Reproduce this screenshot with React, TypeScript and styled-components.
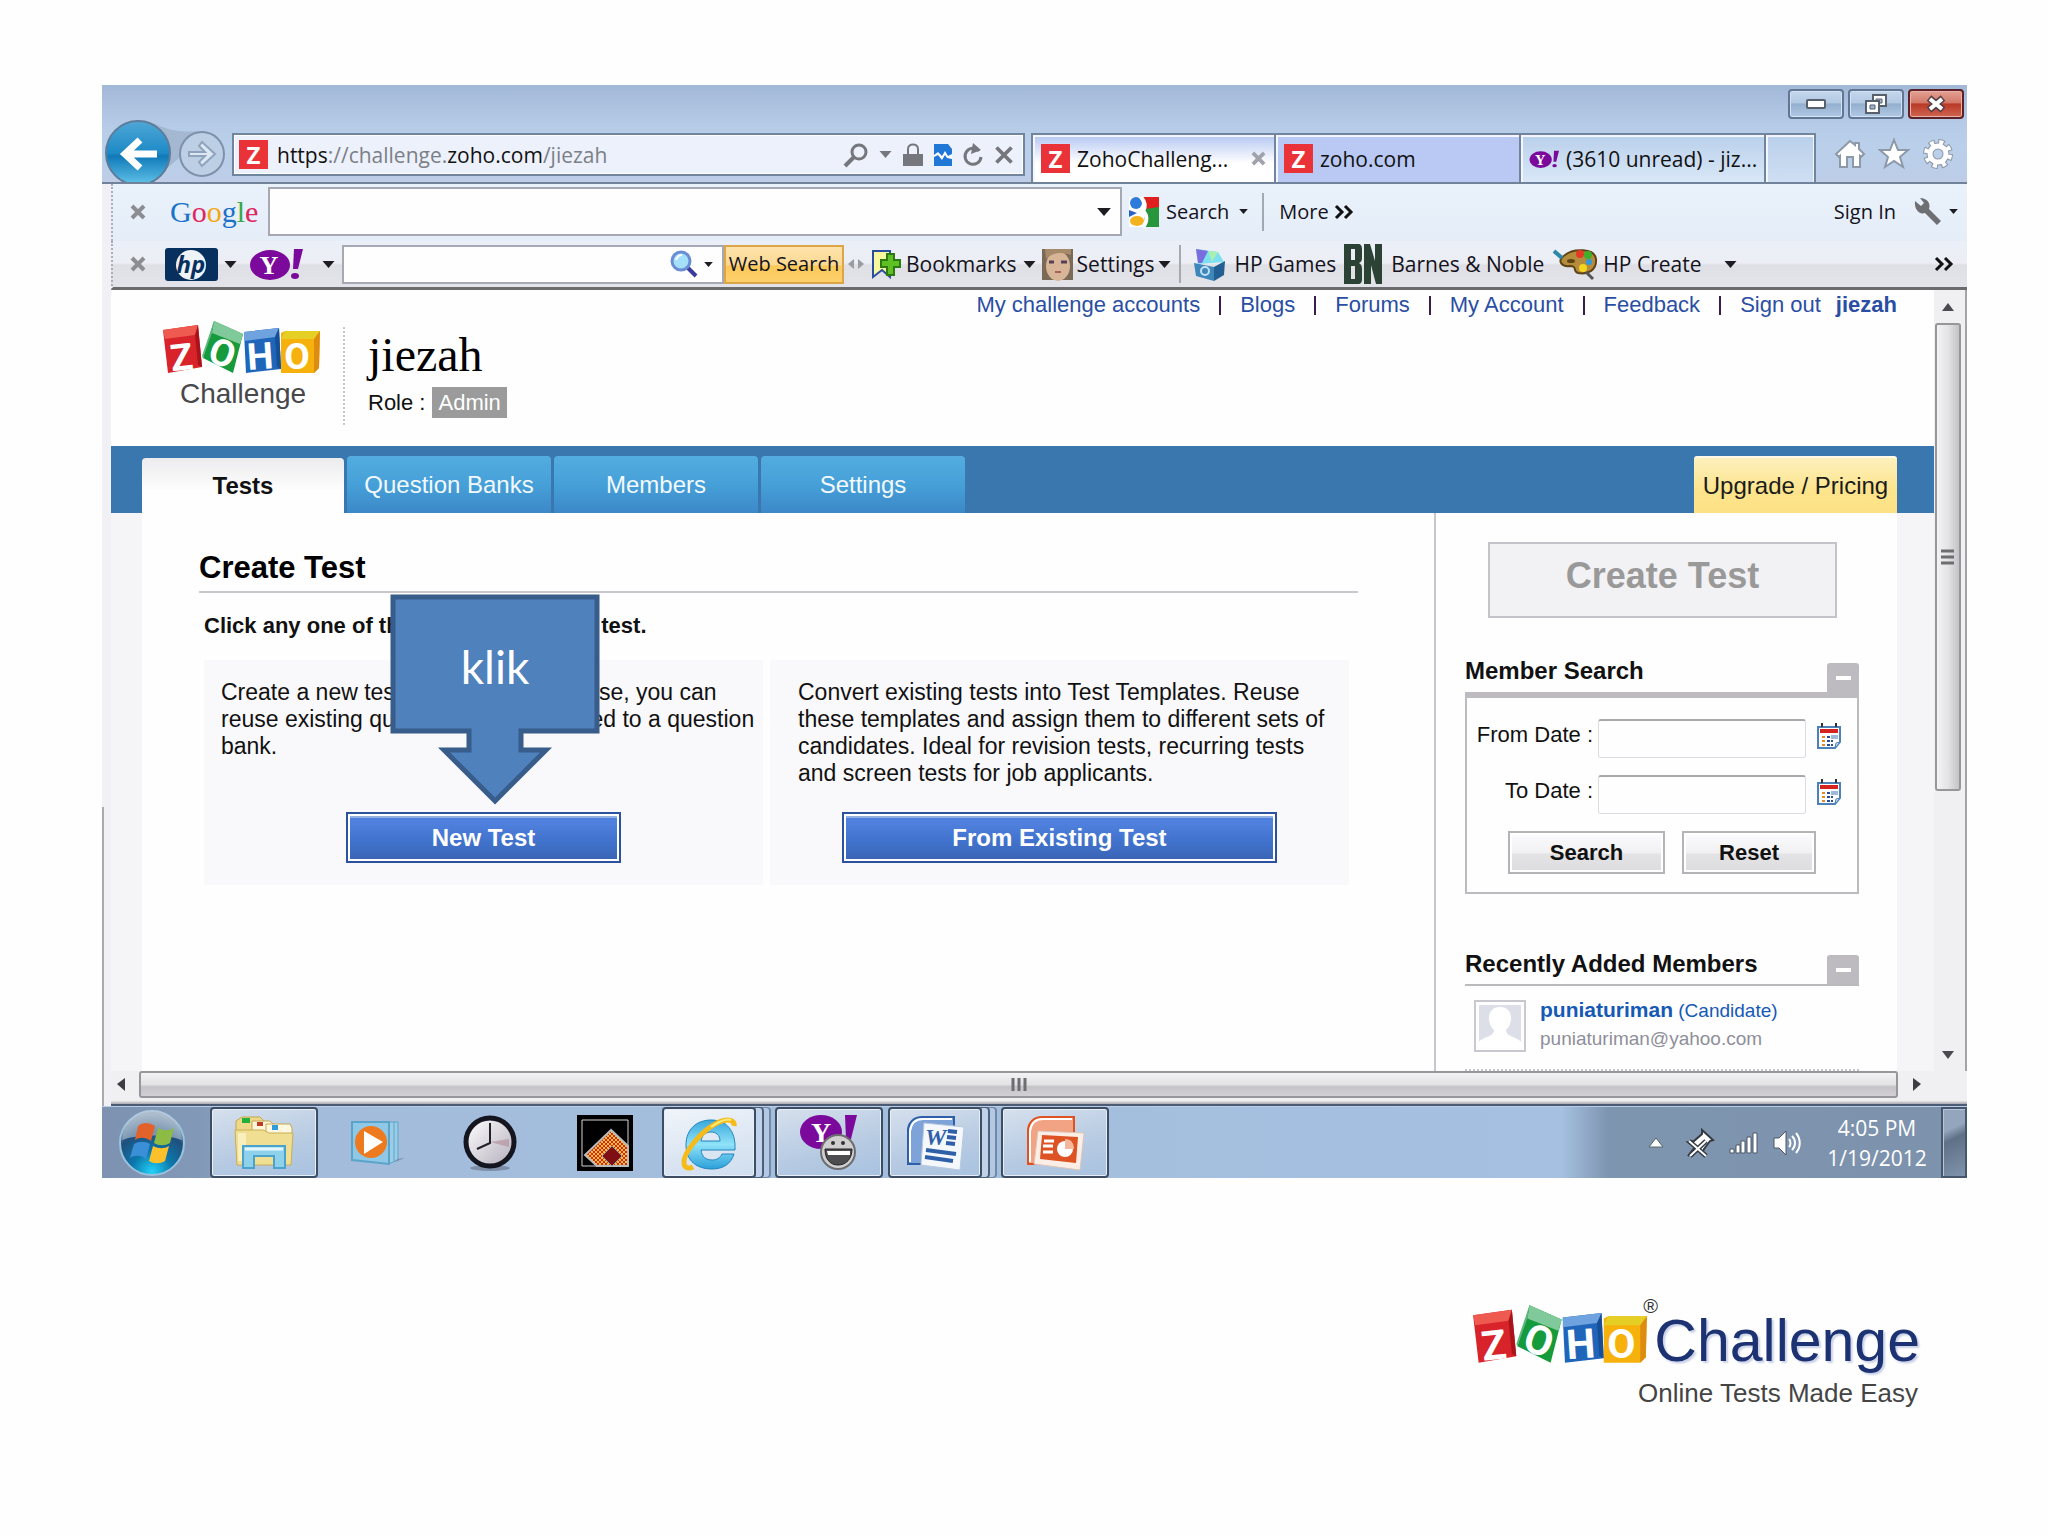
import React from "react";
import styled, { createGlobalStyle, css } from "styled-components";

const sans = `"Liberation Sans", Arial, sans-serif`;
const ui = `"Open Sans", "Noto Sans", sans-serif`;

const GlobalStyle = createGlobalStyle`
  *, *::before, *::after { box-sizing: border-box; }
  body { margin: 0; background: #fefefe; font-family: ${sans}; color: #111; }
  h1, h2, h3, p { margin: 0; }
  a { text-decoration: none; color: inherit; }
  button { font: inherit; color: inherit; border: 0; padding: 0; background: none; cursor: pointer; }
  input { font: inherit; padding: 0 8px; }
  svg { display: block; flex: none; overflow: visible; }
`;

const Slide = styled.div`
  min-height: 100vh;
  padding: 85px 81px 0 102px;
`;

const BrowserWindow = styled.div`
  display: flex;
  flex-direction: column;
`;

/* ---------- title bar, address bar and tabs ---------- */

const Chrome = styled.header`
  background: linear-gradient(#a2b8d7 0, #b4cae6 38px, #bad0ea 60px, #bccde8 92px, #c2cce5 100%);
  border-bottom: 2px solid #70839a;
`;

const CaptionRow = styled.div`
  display: flex;
  justify-content: flex-end;
  gap: 4px;
  height: 48px;
  padding: 4px 3px 0;
`;

const CaptionButton = styled.button<{ $close?: boolean }>`
  display: flex;
  align-items: center;
  justify-content: center;
  width: 56px;
  height: 30px;
  border: 2px solid ${(p) => (p.$close ? "#5a2226" : "#607692")};
  border-radius: 4px;
  box-shadow: inset 0 0 0 1px ${(p) => (p.$close ? "#eeb0a6" : "#d4e3f3")};
  background: ${(p) =>
    p.$close
      ? "linear-gradient(#e3a093 0, #d3796a 45%, #b93a26 50%, #cf6551 100%)"
      : "linear-gradient(#c3d6ec 0, #b3c9e3 45%, #94afcf 50%, #afc8e4 100%)"};
`;

const NavRow = styled.div`
  display: flex;
  align-items: flex-start;
  height: 49px;
  padding: 0 14px 0 3px;
`;

const BackButton = styled.button`
  height: 62px;
  margin: -13px 8px 0 0;
`;

const ForwardButton = styled.button`
  margin: -2px 7px 0 0;
`;

const AddressBar = styled.div`
  display: flex;
  align-items: center;
  flex: 1;
  height: 43px;
  padding: 0 9px 0 5px;
  border: 2px solid #71859e;
  background: #ecf1fb;
  box-shadow: inset 0 0 0 1px #fff;
`;

const Url = styled.div`
  flex: 1;
  padding-left: 9px;
  font: 21px/30px ${ui};
  color: #7b7f86;
  b { font-weight: 400; color: #111; }
`;

const AddressTools = styled.div`
  display: flex;
  align-items: center;
  gap: 11px;
`;

const TabStrip = styled.div`
  display: flex;
  margin: 0 19px 0 6px;
`;

const BrowserTab = styled.button<{ $tone: "active" | "lilac" | "plain" }>`
  display: flex;
  align-items: center;
  gap: 7px;
  width: 245px;
  height: 49px;
  padding: 0 8px;
  border: 2px solid #71859e;
  border-bottom: 0;
  border-left-width: ${(p) => (p.$tone === "active" ? "2px" : "0")};
  box-shadow: inset 2px 2px 0 #f3f7fd;
  font: 21px/30px ${ui};
  text-align: left;
  white-space: nowrap;
  color: #111;
  background: ${(p) =>
    p.$tone === "active"
      ? "linear-gradient(#b4c6f1 0, #fff 60%)"
      : p.$tone === "lilac"
      ? "#b9c9f3"
      : "linear-gradient(#b9cfea, #d9e8f8)"};
  svg:last-child { margin-left: auto; }
`;

const NewTab = styled.button`
  width: 50px;
  height: 49px;
  border: 2px solid #71859e;
  border-width: 2px 2px 0 0;
  box-shadow: inset 2px 2px 0 #f3f7fd, inset -1px 0 0 #f3f7fd;
  background: linear-gradient(#b9cfea, #cfdff3);
`;

const ChromeTools = styled.div`
  display: flex;
  gap: 14px;
  padding-top: 6px;
`;

const Favicon = styled.span`
  display: flex;
  align-items: center;
  justify-content: center;
  flex: none;
  width: 29px;
  height: 29px;
  background: #ea3339;
  color: #fff;
  font: 700 24px/29px ${ui};
`;

/* ---------- toolbars ---------- */

const Frame = styled.div`
  display: flex;
`;

const LeftEdge = styled.div`
  flex: none;
  width: 9px;
  background: linear-gradient(#a9a9ae, #a9a9ae) 0 100% / 2px 299px no-repeat, #f1f1f5;
`;

const FrameBody = styled.div`
  flex: 1;
  min-width: 0;
`;

const toolbar = css`
  display: flex;
  align-items: center;
  padding-left: 17px;
  border-left: 2px dotted #a9afbb;
  color: #14121c;
  white-space: nowrap;
`;

const GoogleBar = styled.div`
  ${toolbar}
  height: 57px;
  padding-right: 9px;
  padding-bottom: 2px;
  font: 20px/30px ${ui};
  background: linear-gradient(#e9f1fb, #e5edf8);
`;

const LinksBar = styled.div`
  ${toolbar}
  height: 49px;
  padding-right: 13px;
  border-bottom: 3px solid #6b6b6e;
  font: 21px/30px ${ui};
  background: linear-gradient(#eaeff8 0, #eceef4 22px, #dfe0e6 24px, #e3e4e9 100%);
`;

const ToolButton = styled.button<{ $gap?: number }>`
  display: flex;
  align-items: center;
  gap: ${(p) => p.$gap ?? 6}px;
`;

const CloseButton = styled.button`
  width: 17px;
  margin-right: 23px;
`;

const GoogleWord = styled.span`
  width: 98px;
  font: 30px/40px "Liberation Serif", serif;
`;

const Letter = styled.span<{ $c: string }>`
  color: ${(p) => p.$c};
`;

const Field = styled.div<{ $w: number; $h: number }>`
  display: flex;
  align-items: center;
  width: ${(p) => p.$w}px;
  min-width: 0;
  height: ${(p) => p.$h}px;
  padding-right: 9px;
  border: 2px solid #a6a8b3;
  background: #fefefe;
  input { flex: 1; min-width: 0; height: 100%; border: 0; background: none; outline: none; }
`;

const Divider = styled.span`
  width: 2px;
  height: 38px;
  background: #a4a8b3;
`;

const WebSearch = styled.button`
  width: 120px;
  height: 39px;
  border: 2px solid #dca548;
  font-size: 20px;
  background: linear-gradient(#fde3ac 0, #fcd992 50%, #fcc95a 55%, #fdd06c 100%);
`;

const Spacer = styled.span`
  flex: 1;
`;

const Group = styled.div<{ $left?: number; $gap: number }>`
  display: flex;
  align-items: center;
  gap: ${(p) => p.$gap}px;
  margin-left: ${(p) => p.$left ?? 0}px;
`;

/* ---------- scroll bars ---------- */

const Viewport = styled.div`
  display: flex;
`;

const VScroll = styled.div`
  display: flex;
  flex-direction: column;
  align-items: center;
  flex: none;
  width: 33px;
  padding: 13px 4px 12px 0;
  border-right: 2px solid #a5a3aa;
  background: #f0eff2;
`;

const VThumb = styled.div`
  display: flex;
  align-items: center;
  justify-content: center;
  width: 26px;
  height: 468px;
  margin: 12px 0 auto;
  border: 2px solid #97979b;
  border-radius: 3px;
  background: linear-gradient(90deg, #f3f3f4, #e4e4e6 50%, #c3c3c7);
`;

const HScroll = styled.div`
  display: flex;
  align-items: center;
  justify-content: space-between;
  height: 35px;
  padding: 0 46px 6px 6px;
  border-bottom: 2px solid #4b5b73;
  background: linear-gradient(#f0eff2 0 29px, #fafafa 29px, #a8a8b0 33px);
`;

const HThumb = styled.div`
  display: flex;
  align-items: center;
  justify-content: center;
  flex: 1;
  height: 27px;
  margin: 0 15px 0 14px;
  border: 2px solid #97979b;
  border-radius: 3px;
  background: linear-gradient(#f3f2f4, #e2e1e4 50%, #c5c3c8 60%, #d2d0d4);
`;

/* ---------- web page ---------- */

const Page = styled.div`
  flex: 1;
  min-width: 0;
  background: #fefefe;
`;

const AccountLinks = styled.nav`
  display: flex;
  justify-content: flex-end;
  align-items: center;
  gap: 19px;
  padding-right: 37px;
  font-size: 22px;
  line-height: 30px;
  color: #2a4ea3;
  white-space: nowrap;
`;

const Pipe = styled.span`
  width: 2px;
  height: 19px;
  background: #3c1c4c;
`;

const UserLink = styled.a`
  margin-left: -4px;
  font-weight: 700;
`;

const Masthead = styled.div`
  display: flex;
  height: 126px;
  padding-left: 51px;
`;

const Brand = styled.div`
  width: 159px;
`;

const BrandWord = styled.div`
  padding-left: 18px;
  font-size: 28px;
  line-height: 32px;
  color: #48484c;
  margin-top: 4px;
`;

const UserBlock = styled.div`
  height: 98px;
  margin: 7px 0 0 22px;
  padding-left: 23px;
  border-left: 2px dotted #c4c4ca;
`;

const UserName = styled.h1`
  font: 400 48px/56px "Liberation Serif", serif;
  color: #000;
`;

const Role = styled.div`
  display: flex;
  gap: 7px;
  margin-top: 4px;
  font-size: 22px;
  line-height: 31px;
`;

const RoleTag = styled.span`
  padding: 0 6px;
  background: #9b9b9b;
  color: #fff;
`;

const SiteNav = styled.nav`
  display: flex;
  align-items: flex-end;
  gap: 3px;
  height: 67px;
  padding: 0 37px 0 31px;
  background: #3a77ae;
  font-size: 24px;
  text-align: center;
`;

const SiteTab = styled.a<{ $active?: boolean }>`
  width: 204px;
  border-radius: 4px 4px 0 0;
  line-height: 57px;
  color: #f2f9ff;
  background: linear-gradient(#54acdf, #46a0d8 50%, #3c88c8);
  ${(p) =>
    p.$active &&
    css`
      width: 202px;
      line-height: 55px;
      font-weight: 700;
      color: #111;
      background: linear-gradient(#ecebed, #fefefe 60%);
    `}
`;

const Upgrade = styled.a`
  width: 203px;
  margin-left: auto;
  border-top: 2px solid #fff9e6;
  border-radius: 3px 3px 0 0;
  line-height: 55px;
  color: #1b1b1b;
  white-space: nowrap;
  background: linear-gradient(#fdf0bd, #fde48c 60%, #fde185);
`;

const Content = styled.div`
  display: flex;
  padding: 0 37px 0 31px;
  background: linear-gradient(#f5f5f7, #f5f5f7);
`;

const Main = styled.main`
  position: relative;
  flex: 1;
  padding: 37px 76px 0 57px;
  background: #fefefe;
`;

const MainTitle = styled.h2`
  padding-bottom: 5px;
  border-bottom: 2px solid #c9c7cd;
  font-size: 31px;
  line-height: 36px;
  color: #000;
`;

const Lead = styled.p`
  margin: 19px 0 20px 5px;
  font-size: 22px;
  font-weight: 700;
  line-height: 28px;
`;

const Cards = styled.div`
  display: grid;
  grid-template-columns: 559fr 579fr;
  gap: 7px;
  margin: 0 9px 0 5px;
`;

const Card = styled.section<{ $inset: number }>`
  display: flex;
  flex-direction: column;
  align-items: center;
  padding: 19px 0 22px;
  background: #f9f8fb;
  p {
    align-self: flex-start;
    margin: 0 0 25px ${(p) => p.$inset}px;
    font-size: 23px;
    line-height: 27px;
    white-space: nowrap;
  }
`;

const BlueButton = styled.button<{ $w: number }>`
  width: ${(p) => p.$w}px;
  height: 51px;
  margin-top: auto;
  border: 2px solid #2c519f;
  box-shadow: inset 0 0 0 2px #fff, inset 0 4px 0 #8fb0e0;
  background: linear-gradient(#4f80dd 20%, #4072cc 60%, #3a63b2);
  color: #fff;
  font-size: 24px;
  font-weight: 700;
`;

const Callout = styled.div`
  position: absolute;
  left: 248px;
  top: 81px;
  width: 210px;
`;

const CalloutText = styled.span`
  position: absolute;
  left: 0;
  top: 43px;
  width: 100%;
  text-align: center;
  font: 46px/60px Lato, sans-serif;
  color: #fff;
`;

const Side = styled.aside`
  flex: none;
  width: 463px;
  padding: 29px 38px 0 29px;
  border-left: 2px solid #c8c6cc;
  background: #fefefe;
`;

const CreateBox = styled.button`
  display: block;
  width: 349px;
  height: 76px;
  margin-left: 23px;
  padding-bottom: 9px;
  border: 2px solid #c5c3c9;
  background: #f2f1f4;
  color: #999;
  font-size: 36px;
  font-weight: 700;
`;

const PanelHead = styled.div<{ $gap: number; $line?: boolean }>`
  display: flex;
  justify-content: space-between;
  height: ${(p) => (p.$line ? 36 : 35)}px;
  margin-top: ${(p) => p.$gap}px;
  border-bottom: ${(p) => (p.$line ? "2px solid #bbb9be" : "0")};
`;

const PanelTitle = styled.h3`
  font-size: 24px;
  line-height: 28px;
`;

const Collapse = styled.button`
  align-self: flex-end;
  display: flex;
  align-items: center;
  justify-content: center;
  width: 32px;
  height: 29px;
  border-radius: 3px 3px 0 0;
  background: #bdbbc0;
  &::before { content: ""; width: 15px; height: 4px; background: #fff; }
`;

const SearchForm = styled.form`
  padding: 21px 0 18px;
  border: 2px solid #bdbbc0;
  border-top-width: 6px;
  font-size: 22px;
`;

const DateRow = styled.div`
  display: flex;
  height: 39px;
  margin-bottom: 17px;
  label { width: 131px; padding-right: 5px; line-height: 32px; text-align: right; }
  input {
    width: 208px;
    border: 1px solid #dcdbe2;
    border-top: 2px solid #a9a8ad;
    border-radius: 3px;
    background: #fefefe;
  }
  button { margin: 4px 0 0 10px; align-self: flex-start; }
`;

const FormActions = styled.div`
  display: flex;
  gap: 17px;
  padding-left: 41px;
`;

const GreyButton = styled.button<{ $w: number }>`
  width: ${(p) => p.$w}px;
  height: 43px;
  border: 2px solid #b5b3b8;
  box-shadow: inset 0 0 0 2px #fff;
  background: linear-gradient(#fbfbfc 0, #f1f0f2 50%, #e3e2e5 55%, #dddcdf 100%);
  font-weight: 700;
`;

const Member = styled.div`
  display: flex;
  gap: 14px;
  height: 85px;
  padding: 14px 0 0 9px;
  border-bottom: 2px dotted #c4c4ca;
`;

const Avatar = styled.div`
  width: 52px;
  height: 52px;
  padding: 3px;
  border: 2px solid #c9c8ce;
`;

const MemberText = styled.div`
  font-size: 19px;
  line-height: 28px;
  color: #8f8f99;
  margin-top: -4px;
  a { color: #1559b7; }
  b { font-size: 21px; }
`;

/* ---------- task bar ---------- */

const Taskbar = styled.footer`
  display: flex;
  align-items: center;
  height: 72px;
  background: linear-gradient(90deg, #7c92b0 0, #8299b7 100px, #a3bcdb 220px, #a5c0e0 1460px, #7e95b0 1506px, #7d92ac 100%);
  border-top: 1px solid #b9cde6;
`;

const StartButton = styled.button`
  width: 108px;
  padding-left: 16px;
`;

const TaskIcon = styled.button<{ $w: number }>`
  display: flex;
  justify-content: center;
  width: ${(p) => p.$w}px;
`;

const TaskWindow = styled.button<{ $stack?: boolean; $bright?: boolean }>`
  display: flex;
  align-items: center;
  justify-content: center;
  width: ${(p) => (p.$stack ? 94 : 108)}px;
  height: 71px;
  margin-right: ${(p) => (p.$stack ? 19 : 5)}px;
  border: 2px solid #3d4d63;
  border-radius: 4px;
  box-shadow: inset 0 0 0 1px #e6eef8
    ${(p) => (p.$stack ? ", 7px 0 0 -1px #bfd2e9, 8px 0 0 0 #4d5f79, 14px 0 0 -1px #b2c8e3, 15px 0 0 0 #7388a5" : "")};
  background: ${(p) =>
    p.$bright
      ? "linear-gradient(165deg, #f1f5fa, #dbe5f2 60%, #cfdef0)"
      : "linear-gradient(165deg, #d6e0ed, #b6cae2 60%, #a9c2e0)"};
`;

const Tray = styled.div`
  display: flex;
  align-items: center;
  gap: 8px;
  margin-left: auto;
`;

const Clock = styled.time`
  width: 112px;
  margin-left: 12px;
  font: 21px/30px ${ui};
  text-align: center;
  color: #fff;
`;

const ShowDesktop = styled.button`
  width: 26px;
  height: 71px;
  border: 2px solid #46566c;
  box-shadow: inset 1px 1px 0 #b5c4d6;
  background: linear-gradient(155deg, #93a6bd 0 30%, #5f7187 45%, #7f93ac);
`;

/* ---------- slide footer ---------- */

const SlideFooter = styled.div`
  display: flex;
  flex-direction: column;
  align-items: flex-end;
  padding: 126px 47px 0 0;
`;

const FooterLogo = styled.div`
  position: relative;
  display: flex;
  align-items: flex-start;
  gap: 6px;
  font-size: 59px;
  line-height: 74px;
  color: #1d3272;
  text-shadow: 2px 2px 2px #c8d0e6;
`;

const Registered = styled.span`
  position: absolute;
  left: 171px;
  top: -10px;
  font-size: 20px;
  line-height: 24px;
  color: #333;
  text-shadow: none;
`;

const Tagline = styled.p`
  padding-right: 2px;
  font-size: 26px;
  line-height: 30px;
  color: #444;
`;

/* ---------- drawings ---------- */

const Caret = ({ w = 13, c = "#1c1c22" }: { w?: number; c?: string }) => (
  <svg width={w} height={Math.round(w * 0.55)} viewBox="0 0 12 7"><path d="M0 0h12L6 7z" fill={c} /></svg>
);

const Cross = ({ s = 16, c = "#8b8d92", w = 4 }: { s?: number; c?: string; w?: number }) => (
  <svg width={s} height={s} viewBox="0 0 16 16"><path d="M2 2l12 12M14 2L2 14" stroke={c} strokeWidth={w} /></svg>
);

const Chevrons = () => (
  <svg width="20" height="14" viewBox="0 0 20 14" fill="none" stroke="#111" strokeWidth="3"><path d="M2 1l6 6-6 6M11 1l6 6-6 6" /></svg>
);

const Cubes = ({ w }: { w: number }) => (
  <svg width={w} height={Math.round((w * 54) / 159)} viewBox="0 0 159 54" role="img" aria-label="ZOHO">
    <path d="M1 10L36 5l4 42L6 53z" fill="#d8232a" />
    <path d="M1 10L36 5l-3 10L3 19z" fill="#ee5a50" />
    <path d="M36 5l4 42-4-2-3-30z" fill="#a9141c" />
    <path d="M52 1l29 13-10 39-30-15z" fill="#159a3c" />
    <path d="M52 1l29 13-3 10-28-11z" fill="#7fc99a" />
    <path d="M52 1l-2 12-9 25-1-2z" fill="#5fb77d" />
    <path d="M82 12l35-4 2 41-35 4z" fill="#1f66bb" />
    <path d="M82 12l35-4-4 9-31 4z" fill="#6fa3e0" />
    <path d="M117 8l2 41-4-2-2-30z" fill="#174f97" />
    <path d="M119 13l4-2h35l-1 37-5 5h-33z" fill="#f6b10c" />
    <path d="M119 19l4-8h35l-6 8z" fill="#e6cf25" />
    <path d="M158 11l-1 37-5 5V19z" fill="#dd8c10" />
    <g fill="#fff" fontFamily="Roboto, sans-serif" fontWeight="700" fontSize="37" textAnchor="middle" style={{ textShadow: "none" }}>
      <text transform="translate(21 50) rotate(-6)">Z</text>
      <text transform="translate(56 45) rotate(20)">O</text>
      <text transform="translate(99 49) rotate(-4)">H</text>
      <text x="135" y="49">O</text>
    </g>
  </svg>
);

const YahooMark = ({ w }: { w: number }) => (
  <svg width={w} height={Math.round((w * 32) / 54)} viewBox="0 0 54 32">
    <ellipse cx="21" cy="17" rx="20" ry="15" fill="#7b0a9c" />
    <text x="20" y="26" textAnchor="middle" fontFamily="Liberation Serif, serif" fontWeight="700" fontSize="26" fill="#fff">Y</text>
    <path d="M45 1h9l-5 20h-5z" fill="#7b0a9c" /><ellipse cx="46" cy="28" rx="4" ry="3" fill="#7b0a9c" />
  </svg>
);

const CalendarIcon = () => (
  <svg width="26" height="27" viewBox="0 0 26 27">
    <path d="M2 4h22v15l-5 6H2z" fill="#fff" stroke="#4b83b8" strokeWidth="2" />
    <path d="M4 6h18v4H4z" fill="#d6231f" />
    <path d="M6 0v4M20 0v4" stroke="#333" strokeWidth="2" />
    <path d="M6 14h3M6 18h3M6 22h3" stroke="#e08a2a" strokeWidth="2" />
    <path d="M11 14h3M11 18h3M11 22h3M15 18h2M15 22h2" stroke="#274f93" strokeWidth="2" />
    <path d="M15 12h7v4h-7z" fill="#9db9dd" /><path d="M19 25l1-5 4-1z" fill="#dbe8f5" stroke="#4b83b8" />
  </svg>
);

const WindowsOrb = () => (
  <svg width="68" height="68" viewBox="0 0 68 68">
    <defs>
      <radialGradient id="orb" cx="50%" cy="95%" r="90%">
        <stop offset="0" stopColor="#22d3fb" /><stop offset=".35" stopColor="#0c78ac" /><stop offset=".7" stopColor="#1f4f7c" /><stop offset="1" stopColor="#8fa5bb" />
      </radialGradient>
    </defs>
    <circle cx="34" cy="34" r="32" fill="url(#orb)" stroke="#9cc2dc" strokeWidth="2" />
    <path d="M4 31a30 30 0 0 1 60 0c-16-6-44-6-60 0z" fill="#c4d0dc" opacity=".55" />
    <path d="M20 17c5-4 11-4 17 0l-4 15c-6-4-11-4-16-1z" fill="#e2622b" />
    <path d="M40 19c6 3 11 3 16 0l-4 15c-5 3-11 3-16 0z" fill="#8dbb43" />
    <path d="M16 35c5-3 11-3 16 0l-4 15c-5-4-11-4-16-1z" fill="#3b8fd6" />
    <path d="M35 37c6 3 11 3 16 0l-4 15c-5 3-11 3-16 0z" fill="#fbc02a" />
  </svg>
);

const ExplorerIcon = () => (
  <svg width="60" height="54" viewBox="0 0 60 54">
    <path d="M2 5l6-4h18l4 4v10H2z" fill="#eed98a" stroke="#c5a64f" />
    <path d="M8 2h8v5H8z" fill="#21b13b" /><path d="M18 5h18l4 4v10H18z" fill="#fdf6da" stroke="#c5a64f" />
    <path d="M23 6h6v4h-6z" fill="#bf3b23" /><path d="M32 8h24l2 4v8H32z" fill="#fff8de" stroke="#c5a64f" />
    <path d="M38 9h6v5h-6z" fill="#2d9bdc" />
    <path d="M1 14h28l6 3h24l-2 32H3z" fill="#f0df92" stroke="#c9ad55" />
    <path d="M4 17h8v28H4z" fill="#f9efbd" />
    <path d="M9 30h42v22H40V40H20v12H9z" fill="#8fd0ea" stroke="#4aa3cb" strokeWidth="2" />
    <path d="M11 33h38" stroke="#e2f7ff" strokeWidth="3" />
  </svg>
);

const MediaIcon = () => (
  <svg width="54" height="48" viewBox="0 0 54 48">
    <path d="M34 3h13v38l-10 4z" fill="#9ccde6" stroke="#5aa4c9" />
    <path d="M38 3v40M43 3v39" stroke="#5aa4c9" />
    <path d="M1 3h37v42L1 41z" fill="#8ec8e6" stroke="#5aa4c9" strokeWidth="2" />
    <circle cx="20" cy="23" r="16" fill="#ee7a20" /><path d="M13 12l19 11-19 12z" fill="#fff" />
    <path d="M44 43l10-4-8 1z" fill="#7d93ad" />
  </svg>
);

const ClockIcon = () => (
  <svg width="56" height="56" viewBox="0 0 56 56">
    <defs><linearGradient id="dial" x2="1" y2="1"><stop stopColor="#fff" /><stop offset="1" stopColor="#b4aebb" /></linearGradient></defs>
    <ellipse cx="28" cy="53" rx="20" ry="3" fill="#7d8fa8" />
    <circle cx="28" cy="27" r="24" fill="url(#dial)" stroke="#14151f" strokeWidth="5" />
    <path d="M28 27l19-3v8z" fill="#b08a94" opacity=".6" />
    <path d="M28 8v20L15 34" stroke="#22222a" strokeWidth="2" fill="none" />
  </svg>
);

const DiamondIcon = () => (
  <svg width="56" height="56" viewBox="0 0 56 56">
    <defs><pattern id="check" width="4" height="4" patternUnits="userSpaceOnUse"><path d="M0 0h4v4H0z" fill="#f6c043" /><path d="M0 0h2v2H0zM2 2h2v2H2z" fill="#d82a12" /></pattern></defs>
    <path d="M0 0h56v56H0z" fill="#000" /><path d="M5 5h46v46H5z" fill="none" stroke="#d4d4d8" />
    <path d="M34 15L8 40l12 11h31V31z" fill="url(#check)" stroke="#bbb" strokeWidth="2" />
    <path d="M35 31l10 10-10 10-10-10z" fill="#7f0f12" stroke="#999" />
  </svg>
);

const IeIcon = () => (
  <svg width="56" height="56" viewBox="0 0 56 56">
    <defs><linearGradient id="ie" x2="0" y2="1"><stop stopColor="#3aa8dd" /><stop offset=".5" stopColor="#8fe2f8" /><stop offset="1" stopColor="#2ba0da" /></linearGradient></defs>
    <path d="M54 35H20c1 7 5 10 11 10 5 0 8-2 10-6h12c-3 10-11 15-22 15C16 54 5 46 5 30S16 5 30 5c15 0 25 10 24 30zM20 26h19c0-6-4-9-9-9s-9 3-10 9z" fill="url(#ie)" stroke="#2585bd" />
    <path d="M53 11c1-5-5-9-17-3C20 16 2 38 3 48c0 5 5 6 9 4" fill="none" stroke="#f4bb1b" strokeWidth="5" />
    <path d="M50 5c-5-2-13 2-20 7" fill="none" stroke="#fdec7a" strokeWidth="2" />
  </svg>
);

const MessengerIcon = () => (
  <svg width="58" height="56" viewBox="0 0 58 56">
    <ellipse cx="21" cy="17" rx="21" ry="17" fill="#7b0a9c" />
    <text x="21" y="27" textAnchor="middle" fontFamily="Liberation Serif, serif" fontWeight="700" fontSize="28" fill="#fff">Y</text>
    <path d="M45 0h12l-6 24h-5z" fill="#7b0a9c" />
    <circle cx="38" cy="37" r="17" fill="#cfcfcf" stroke="#6d6d70" strokeWidth="2" />
    <circle cx="33" cy="28" r="2" fill="#333" /><circle cx="43" cy="28" r="2" fill="#333" />
    <path d="M25 34h27c0 10-6 16-14 16s-13-6-13-16z" fill="#4d4d50" stroke="#222" /><path d="M27 36h23v4H28z" fill="#fff" />
  </svg>
);

const OfficeIcon = ({ kind }: { kind: "word" | "ppt" }) => {
  const c = kind === "word" ? "#2f5fa9" : "#dd5323";
  return (
    <svg width="58" height="56" viewBox="0 0 58 56">
      <path d="M2 49V14C3 7 8 2 16 2h32v20L20 49z" fill={kind === "word" ? "#7ea3d8" : "#f2a383"} stroke={c} strokeWidth="2" />
      <path d="M4 47V16C5 9 9 4 17 4h29" fill="none" stroke="#fff" strokeWidth="2" />
      {kind === "word" ? (
        <>
          <path d="M18 8l40 4-4 43-39-5z" fill="#f4f8fd" stroke="#b7c8de" />
          <text x="19" y="30" fontFamily="Liberation Serif, serif" fontStyle="italic" fontWeight="700" fontSize="24" fill={c}>W</text>
          <path d="M42 16l9 1M41 22l9 1M40 28l9 1M20 35l30 4M19 42l28 4" stroke={c} strokeWidth="4" />
        </>
      ) : (
        <>
          <path d="M12 16l46 2-4 37-46-6z" fill="#fbeee6" stroke="#dcc6b8" />
          <path d="M16 20l36 2-2 26-36-4z" fill={c} />
          <path d="M18 26h10M17 31h10M17 37h10" stroke="#fff" strokeWidth="3" />
          <circle cx="39" cy="34" r="8" fill="#fff" /><path d="M39 34V24c6 0 9 4 9 10z" fill="#f4b79c" />
        </>
      )}
    </svg>
  );
};

const Magnifier = () => (
  <svg width="28" height="28" viewBox="0 0 28 28">
    <path d="M17 17l9 9" stroke="#3a3a9c" strokeWidth="4" /><circle cx="11" cy="11" r="9" fill="#a5e0fb" stroke="#6a8ed4" strokeWidth="3" /><path d="M6 10c1-3 3-5 6-5" stroke="#fff" strokeWidth="2" fill="none" />
  </svg>
);

export default function App() {
  return (
    <>
      <GlobalStyle />
      <Slide>
        <BrowserWindow>
          <Chrome>
            <CaptionRow>
              <CaptionButton aria-label="Minimize">
                <svg width="20" height="10" viewBox="0 0 20 10"><rect x="1" y="1" width="18" height="8" rx="1" fill="#fff" stroke="#58606c" strokeWidth="2" /></svg>
              </CaptionButton>
              <CaptionButton aria-label="Restore">
                <svg width="22" height="20" viewBox="0 0 22 20" fill="#fff" stroke="#58606c"><path d="M8 1h13v11H8z" strokeWidth="2" /><path d="M11 5h6v4h-6z" fill="#9db4d1" /><path d="M1 7h13v12H1z" strokeWidth="2" /><path d="M5 11h5v4H5z" fill="#9db4d1" /></svg>
              </CaptionButton>
              <CaptionButton $close aria-label="Close">
                <svg width="20" height="16" viewBox="0 0 20 16"><path d="M3 2l14 12M17 2L3 14" stroke="#56414b" strokeWidth="7" /><path d="M4 3l12 10M16 3L4 13" stroke="#fff" strokeWidth="4" /></svg>
              </CaptionButton>
            </CaptionRow>
            <NavRow>
              <BackButton aria-label="Back">
                <svg width="66" height="62" viewBox="0 0 66 62">
                  <defs><linearGradient id="back" x2="0" y2="1"><stop stopColor="#4fa7d6" /><stop offset=".5" stopColor="#1d8ac6" /><stop offset=".55" stopColor="#1079b8" /><stop offset="1" stopColor="#62c4ea" /></linearGradient><clipPath id="cut"><path d="M-2-2h140v64H-2z" /></clipPath></defs>
                  <g clipPath="url(#cut)">
                    <path d="M42 1c12 3 22 13 52 10L74 38 60 50z" fill="#a4b8d1" />
                    <circle cx="33" cy="33" r="32" fill="url(#back)" stroke="#5d7c99" strokeWidth="2" />
                    <path d="M52 34H20M35 20L20 34l15 14" fill="none" stroke="#fff" strokeWidth="7" />
                  </g>
                </svg>
              </BackButton>
              <ForwardButton aria-label="Forward">
                <svg width="46" height="46" viewBox="0 0 46 46"><circle cx="23" cy="23" r="22" fill="#bccfe5" stroke="#7e91ab" strokeWidth="2" /><path d="M10 21h16l-6-6 3-4 13 12-13 12-3-4 6-6H10z" fill="#dce7f4" stroke="#8fa3bc" strokeWidth="2" /></svg>
              </ForwardButton>
              <AddressBar>
                <Favicon>Z</Favicon>
                <Url><b>https</b>://challenge.<b>zoho.com</b>/jiezah</Url>
                <AddressTools>
                  <svg width="24" height="24" viewBox="0 0 24 24" fill="none" stroke="#75777c"><circle cx="15" cy="9" r="7" strokeWidth="3" /><path d="M10 14l-9 9" strokeWidth="4" /></svg>
                  <Caret c="#75777c" />
                  <svg width="20" height="24" viewBox="0 0 20 24"><path d="M0 11h20v12H0z" fill="#75777c" /><path d="M5 11V6c0-6 10-6 10 0v5" fill="none" stroke="#75777c" strokeWidth="2" /></svg>
                  <svg width="18" height="24" viewBox="0 0 18 24"><path d="M0 1h14l4 5v17H0z" fill="#2177d6" /><path d="M0 12l4-3 4 4 3-5 3 5 4-2v5l-5-1-2-3-3 5-4-5-4 2z" fill="#fff" /></svg>
                  <svg width="20" height="24" viewBox="0 0 20 24"><path d="M16 8a8 8 0 1 0 2 6" fill="none" stroke="#75777c" strokeWidth="3" /><path d="M10 0l8 7-10 4z" fill="#75777c" /></svg>
                  <Cross s={20} c="#75777c" w={3} />
                </AddressTools>
              </AddressBar>
              <TabStrip>
                <BrowserTab $tone="active"><Favicon>Z</Favicon>ZohoChalleng...<Cross s={15} c="#a0a3ab" w={4} /></BrowserTab>
                <BrowserTab $tone="lilac"><Favicon>Z</Favicon>zoho.com</BrowserTab>
                <BrowserTab $tone="plain"><YahooMark w={30} /><span>(3610 unread) - jiz...</span></BrowserTab>
                <NewTab aria-label="New tab" />
              </TabStrip>
              <ChromeTools>
                <button aria-label="Home"><svg width="30" height="30" viewBox="0 0 30 30"><path d="M15 2L1 15l3 3 1-1v11h7V18h6v10h7V17l1 1 3-3-5-5V4h-4v2z" fill="#fff" stroke="#8d99a8" strokeWidth="2" /></svg></button>
                <button aria-label="Favorites"><svg width="30" height="30" viewBox="0 0 30 30"><path d="M15 1l4 10h10l-8 7 3 10-9-6-9 6 3-10-8-7h10z" fill="#fff" stroke="#8d99a8" strokeWidth="2" /></svg></button>
                <button aria-label="Tools"><svg width="30" height="30" viewBox="0 0 30 30" fill="none"><circle cx="15" cy="15" r="12" stroke="#8d99a8" strokeWidth="6" strokeDasharray="6 3.42" /><circle cx="15" cy="15" r="8" stroke="#8d99a8" strokeWidth="7" /><circle cx="15" cy="15" r="12" stroke="#fff" strokeWidth="4" strokeDasharray="4 5.42" strokeDashoffset="-1" /><circle cx="15" cy="15" r="8" stroke="#fff" strokeWidth="5" /></svg></button>
              </ChromeTools>
            </NavRow>
          </Chrome>

          <Frame>
            <LeftEdge />
            <FrameBody>
              <GoogleBar>
                <CloseButton aria-label="Close Google toolbar"><Cross /></CloseButton>
                <GoogleWord>
                  <Letter $c="#1a73c8">G</Letter><Letter $c="#e0245e">o</Letter><Letter $c="#f3a712">o</Letter><Letter $c="#1a73c8">g</Letter><Letter $c="#3aa845">l</Letter><Letter $c="#e0245e">e</Letter>
                </GoogleWord>
                <Field $w={854} $h={49}><input aria-label="Google search" /><Caret w={14} /></Field>
                <Group $left={7} $gap={10}>
                  <ToolButton $gap={7}>
                    <svg width="30" height="30" viewBox="0 0 30 30"><path d="M0 0h30v30H0z" fill="#fff" /><path d="M14 0h16v12H16z" fill="#e01f1f" /><path d="M16 12l14-2v20H15z" fill="#27963c" /><circle cx="7" cy="6" r="6" fill="#2f7bdc" /><path d="M0 13l8 3-8 4z" fill="#2a62c4" /><ellipse cx="8" cy="24" rx="7" ry="5" fill="#f4b31c" /><path d="M12 0c5 6 5 10 2 14 4 4 5 10 0 16" fill="none" stroke="#fff" strokeWidth="4" /></svg>
                    Search
                  </ToolButton>
                  <Caret w={9} />
                  <Group $left={4} $gap={6}><Divider /></Group>
                </Group>
                <Group $left={15} $gap={4}><ToolButton $gap={5}>More <Chevrons /></ToolButton></Group>
                <Spacer />
                <Group $gap={9}>
                  <a href="#signin">Sign In</a>
                  <Group $left={8} $gap={8}>
                    <svg width="28" height="28" viewBox="0 0 28 28"><path d="M2 3l6 5 3-3-4-5c7 0 11 5 9 11l12 12-4 4-12-12C6 17 1 11 2 3z" fill="#6d6f72" /></svg>
                    <Caret w={9} />
                  </Group>
                </Group>
              </GoogleBar>

              <LinksBar>
                <CloseButton aria-label="Close toolbar"><Cross /></CloseButton>
                <Group $left={-5} $gap={6}>
                  <svg width="53" height="33" viewBox="0 0 53 33"><rect width="53" height="33" rx="3" fill="#08305e" /><circle cx="26" cy="17" r="15" fill="#eef3f8" /><text x="26" y="25" textAnchor="middle" fontFamily="Open Sans, sans-serif" fontStyle="italic" fontWeight="700" fontSize="24" fill="#08305e">hp</text></svg>
                  <Caret />
                </Group>
                <Group $left={12} $gap={19}><YahooMark w={54} /><Caret /></Group>
                <Group $left={7} $gap={0}>
                  <Field $w={382} $h={39}><input aria-label="Yahoo search" /><Group $gap={6}><Magnifier /><Caret w={9} /></Group></Field>
                  <WebSearch>Web Search</WebSearch>
                </Group>
                <Group $left={4} $gap={4}>
                  <svg width="6" height="10" viewBox="0 0 6 10"><path d="M6 0v10L0 5z" fill="#9a9ca4" /></svg>
                  <svg width="6" height="10" viewBox="0 0 6 10"><path d="M0 0v10l6-5z" fill="#9a9ca4" /></svg>
                </Group>
                <Group $left={8} $gap={6}>
                  <ToolButton>
                    <svg width="28" height="29" viewBox="0 0 28 29"><path d="M1 1h17v26l-8-7-9 7z" fill="#f7f7a0" stroke="#2b4da0" strokeWidth="2" /><path d="M15 4h7v6h6v7h-6v8h-7v-8H9v-7h6z" fill="#5fc024" stroke="#2d7a14" strokeWidth="2" /></svg>
                    Bookmarks <Caret />
                  </ToolButton>
                  <ToolButton $gap={4}>
                    <svg width="31" height="31" viewBox="0 0 31 31"><path d="M0 0h31v31H0z" fill="#7b6a58" /><ellipse cx="16" cy="17" rx="12" ry="15" fill="#d8b596" /><path d="M3 0h26v6C18 2 10 4 4 10z" fill="#a68a6a" /><path d="M7 13h5M19 13h6" stroke="#54405a" strokeWidth="3" /><path d="M13 23h6" stroke="#a8605a" strokeWidth="2" /></svg>
                    Settings <Caret />
                  </ToolButton>
                </Group>
                <Group $left={8} $gap={13}>
                  <Divider />
                  <ToolButton $gap={8}>
                    <svg width="32" height="33" viewBox="0 0 32 33"><path d="M2 1l22 3 6 10-26 2z" fill="#7ce0f0" /><path d="M2 1l12 2-6 12H4z" fill="#7a6de0" /><path d="M14 3l10 1-6 10z" fill="#a8f0b0" /><path d="M0 15l20 4v14L2 28z" fill="#3d87bb" /><path d="M20 19l11-6-1 14-10 6z" fill="#235f93" /><circle cx="11" cy="23" r="4" fill="none" stroke="#bfe2f5" strokeWidth="2" /></svg>
                    HP Games
                  </ToolButton>
                </Group>
                <Group $left={8} $gap={9}>
                  <ToolButton $gap={8}>
                    <svg width="39" height="40" viewBox="0 0 39 40"><path fillRule="evenodd" d="M0 0h14c3 0 4 2 4 5v9c0 3-1 4-3 5 2 1 3 3 3 6v10c0 3-1 5-4 5H0zM7 5h4v11H7zM7 22h4v13H7z" fill="#2b4235" /><path d="M20 0h6l5 17V0h7v40h-6l-5-19v19h-7z" fill="#2b4235" /></svg>
                    Barnes &amp; Noble
                  </ToolButton>
                  <ToolButton>
                    <svg width="44" height="31" viewBox="0 0 44 31"><path d="M12 6C20-1 42-1 43 10s-8 16-18 14c-6-2 0-7-8-7-8 1-14-5-5-11z" fill="#b58b3c" stroke="#5e4316" strokeWidth="2" /><ellipse cx="18" cy="12" rx="4" ry="2" fill="#5e4316" /><circle cx="27" cy="5" r="4" fill="#e23a24" /><circle cx="35" cy="6" r="4" fill="#3fae2b" /><circle cx="36" cy="13" r="3" fill="#2d9bdc" /><circle cx="30" cy="19" r="4" fill="#f3d51e" /><path d="M1 2l8 7" stroke="#2d87a8" strokeWidth="4" /><path d="M33 23l7 7" stroke="#555" strokeWidth="3" /></svg>
                    HP Create
                  </ToolButton>
                  <Group $left={14} $gap={0}><Caret /></Group>
                </Group>
                <Spacer />
                <button aria-label="More links"><Chevrons /></button>
              </LinksBar>

              <Viewport>
                <Page>
                  <AccountLinks>
                    <a href="#accounts">My challenge accounts</a><Pipe />
                    <a href="#blogs">Blogs</a><Pipe />
                    <a href="#forums">Forums</a><Pipe />
                    <a href="#account">My Account</a><Pipe />
                    <a href="#feedback">Feedback</a><Pipe />
                    <a href="#signout">Sign out</a>
                    <UserLink href="#user">jiezah</UserLink>
                  </AccountLinks>
                  <Masthead>
                    <Brand>
                      <Cubes w={159} />
                      <BrandWord>Challenge</BrandWord>
                    </Brand>
                    <UserBlock>
                      <UserName>jiezah</UserName>
                      <Role>Role : <RoleTag>Admin</RoleTag></Role>
                    </UserBlock>
                  </Masthead>
                  <SiteNav>
                    <SiteTab $active href="#tests">Tests</SiteTab>
                    <SiteTab href="#banks">Question Banks</SiteTab>
                    <SiteTab href="#members">Members</SiteTab>
                    <SiteTab href="#settings">Settings</SiteTab>
                    <Upgrade href="#pricing">Upgrade / Pricing</Upgrade>
                  </SiteNav>
                  <Content>
                    <Main>
                      <MainTitle>Create Test</MainTitle>
                      <Lead>Click any one of the options to create test.</Lead>
                      <Cards>
                        <Card $inset={17}>
                          <p>Create a new test right away. Of course, you can<br />reuse existing questions already linked to a question<br />bank.</p>
                          <BlueButton $w={275}>New Test</BlueButton>
                        </Card>
                        <Card $inset={28}>
                          <p>Convert existing tests into Test Templates. Reuse<br />these templates and assign them to different sets of<br />candidates. Ideal for revision tests, recurring tests<br />and screen tests for job applicants.</p>
                          <BlueButton $w={435}>From Existing Test</BlueButton>
                        </Card>
                      </Cards>
                      <Callout>
                        <svg width="210" height="213" viewBox="0 0 210 213"><path d="M3 3h204v134h-76v19h25l-51 51-51-51h25v-19H3z" fill="#4f81bd" stroke="#385d8a" strokeWidth="5" /></svg>
                        <CalloutText>klik</CalloutText>
                      </Callout>
                    </Main>
                    <Side>
                      <CreateBox>Create Test</CreateBox>
                      <PanelHead $gap={39}><PanelTitle>Member Search</PanelTitle><Collapse aria-label="Collapse member search" /></PanelHead>
                      <SearchForm onSubmit={(e) => e.preventDefault()}>
                        <DateRow><label htmlFor="from">From Date :</label><input id="from" /><button type="button" aria-label="Pick from date"><CalendarIcon /></button></DateRow>
                        <DateRow><label htmlFor="to">To Date :</label><input id="to" /><button type="button" aria-label="Pick to date"><CalendarIcon /></button></DateRow>
                        <FormActions><GreyButton $w={157}>Search</GreyButton><GreyButton $w={134} type="reset">Reset</GreyButton></FormActions>
                      </SearchForm>
                      <PanelHead $gap={56} $line><PanelTitle>Recently Added Members</PanelTitle><Collapse aria-label="Collapse members" /></PanelHead>
                      <Member>
                        <Avatar><svg width="42" height="42" viewBox="0 0 42 42"><path d="M0 0h42v42H0z" fill="#dcdfe7" /><path d="M21 2c8 0 12 6 11 13-1 6-3 8-5 10 0 7 12 7 15 12v5H0v-5c3-5 15-5 15-12-2-2-4-4-5-10C9 8 13 2 21 2z" fill="#fff" /></svg></Avatar>
                        <MemberText>
                          <div><a href="#member"><b>puniaturiman</b> (Candidate)</a></div>
                          <div>puniaturiman@yahoo.com</div>
                        </MemberText>
                      </Member>
                    </Side>
                  </Content>
                </Page>
                <VScroll>
                  <svg width="12" height="8" viewBox="0 0 12 8"><path d="M0 8h12L6 0z" fill="#4a4a50" /></svg>
                  <VThumb><svg width="13" height="16" viewBox="0 0 13 16"><path d="M0 2h13M0 8h13M0 14h13" stroke="#6d6d72" strokeWidth="3" /></svg></VThumb>
                  <svg width="12" height="8" viewBox="0 0 12 8"><path d="M0 0h12L6 8z" fill="#4a4a50" /></svg>
                </VScroll>
              </Viewport>
              <HScroll>
                <svg width="8" height="13" viewBox="0 0 8 13"><path d="M8 0v13L0 6z" fill="#3c3c42" /></svg>
                <HThumb><svg width="16" height="13" viewBox="0 0 16 13"><path d="M2 0v13M8 0v13M14 0v13" stroke="#6d6d72" strokeWidth="3" /></svg></HThumb>
                <svg width="8" height="13" viewBox="0 0 8 13"><path d="M0 0v13l8-7z" fill="#3c3c42" /></svg>
              </HScroll>
            </FrameBody>
          </Frame>

          <Taskbar>
            <StartButton aria-label="Start"><WindowsOrb /></StartButton>
            <TaskWindow aria-label="Explorer"><ExplorerIcon /></TaskWindow>
            <TaskIcon $w={110} aria-label="Media Player"><MediaIcon /></TaskIcon>
            <TaskIcon $w={114} aria-label="Clock"><ClockIcon /></TaskIcon>
            <TaskIcon $w={115} aria-label="Gallery"><DiamondIcon /></TaskIcon>
            <TaskWindow $stack $bright aria-label="Internet Explorer"><IeIcon /></TaskWindow>
            <TaskWindow aria-label="Messenger"><MessengerIcon /></TaskWindow>
            <TaskWindow $stack aria-label="Word"><OfficeIcon kind="word" /></TaskWindow>
            <TaskWindow aria-label="PowerPoint"><OfficeIcon kind="ppt" /></TaskWindow>
            <Tray>
              <svg width="14" height="9" viewBox="0 0 14 9"><path d="M0 9L7 0l7 9z" fill="#fff" stroke="#566" /></svg>
              <Group $left={15} $gap={15}>
                <svg width="28" height="28" viewBox="0 0 28 28"><path d="M16 1l11 10-3 1-6 8-2 5-6-6-8 8 7-9-7-5 6-1 8-7z" fill="#fff" stroke="#333a44" strokeWidth="2" /><path d="M3 12l17 15M20 12L4 27" stroke="#333a44" strokeWidth="5" /><path d="M3 12l17 15M20 12L4 27" stroke="#fff" strokeWidth="2" /></svg>
                <svg width="29" height="22" viewBox="0 0 29 22" fill="#fff" stroke="#4a5666"><path d="M1 17h4v4H1zM7 13h4v8H7zM12 9h4v12h-4zM18 5h4v16h-4zM24 1h4v20h-4z" /></svg>
                <svg width="28" height="26" viewBox="0 0 28 26"><path d="M1 8h5l7-7v24l-7-7H1z" fill="#fff" stroke="#4a5666" /><path d="M16 9c2 2 2 6 0 8M19 6c4 4 4 10 0 14M23 3c5 6 5 14 0 20" fill="none" stroke="#fff" strokeWidth="2" /></svg>
              </Group>
              <Clock>4:05 PM<br />1/19/2012</Clock>
              <ShowDesktop aria-label="Show desktop" />
            </Tray>
          </Taskbar>
        </BrowserWindow>

        <SlideFooter>
          <FooterLogo><Cubes w={176} /><Registered>®</Registered>Challenge</FooterLogo>
          <Tagline>Online Tests Made Easy</Tagline>
        </SlideFooter>
      </Slide>
    </>
  );
}
